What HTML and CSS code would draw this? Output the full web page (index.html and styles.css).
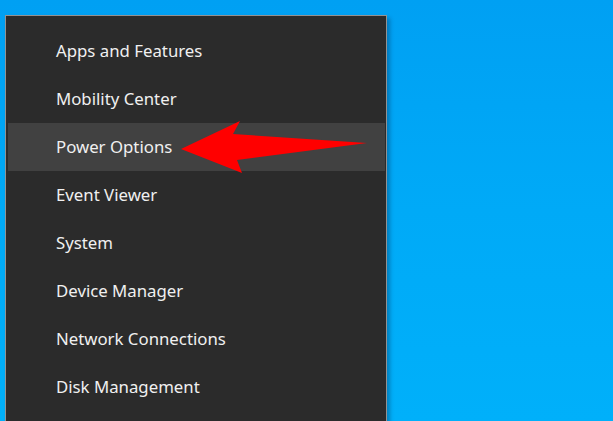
FILE: index.html
```html
<!DOCTYPE html>
<html>
<head>
<meta charset="utf-8">
<link rel="stylesheet" href="styles.css">
</head>
<body>
<div class="menu">
  <div class="item">Apps and Features</div>
  <div class="item">Mobility Center</div>
  <div class="item active">Power Options</div>
  <div class="item">Event Viewer</div>
  <div class="item">System</div>
  <div class="item">Device Manager</div>
  <div class="item">Network Connections</div>
  <div class="item">Disk Management</div>
</div>
<svg class="arrow" width="613" height="421" viewBox="0 0 613 421">
  <polygon points="181,149 240,121 233,134 367,143 237,160 242,173" fill="#ff0000"/>
</svg>
</body>
</html>
```
FILE: styles.css
```css
html, body {
  margin: 0;
  padding: 0;
  width: 613px;
  height: 421px;
  overflow: hidden;
}
body {
  background: linear-gradient(180deg, #00a0f3 0%, #00aaf7 50%, #00b0fa 100%);
  position: relative;
  font-family: "Noto Sans", "Open Sans", sans-serif;
}
.menu {
  margin-left: 5px;
  margin-top: 15px;
  width: 380px;
  height: 420px;
  background: #2b2b2b;
  border: 1px solid #929292;
  padding-top: 11px;
  box-shadow: 3px 3px 4px rgba(0, 40, 80, 0.35);
  box-sizing: content-box;
}
.item {
  height: 48px;
  box-sizing: border-box;
  padding-bottom: 2px;
  display: flex;
  align-items: center;
  padding-left: 50px;
  color: #f0f0f0;
  font-size: 16.8px;
}
.item.active {
  background: #414141;
  margin: 0 1px 0 2px;
  padding-left: 48px;
}
.arrow {
  position: absolute;
  left: 0;
  top: 0;
}
```
